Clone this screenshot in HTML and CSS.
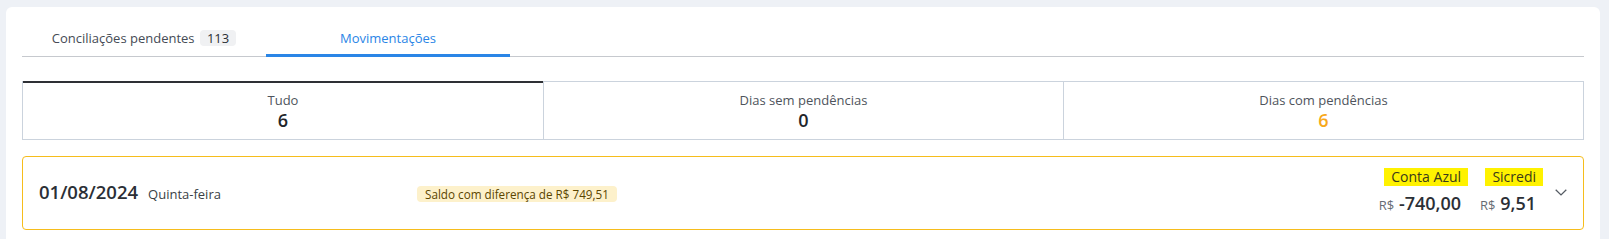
FILE: index.html
```html
<!DOCTYPE html>
<html lang="pt-BR">
<head>
<meta charset="utf-8">
<title>Movimentações</title>
<link rel="stylesheet" href="styles.css">
</head>
<body>
<div class="page">
  <div class="card">
    <div class="tabs">
      <div class="tab">Conciliações pendentes <span class="count">113</span></div>
      <div class="tab active">Movimentações</div>
    </div>

    <div class="stats">
      <div class="stat selected">
        <div class="stat-label">Tudo</div>
        <div class="stat-value">6</div>
      </div>
      <div class="stat">
        <div class="stat-label">Dias sem pendências</div>
        <div class="stat-value">0</div>
      </div>
      <div class="stat">
        <div class="stat-label">Dias com pendências</div>
        <div class="stat-value warn">6</div>
      </div>
    </div>

    <div class="day">
      <div class="day-date">
        <span class="date">01/08/2024</span>
        <span class="weekday">Quinta-feira</span>
      </div>
      <div class="day-status">
        <span class="diff">Saldo com diferença de R$ 749,51</span>
      </div>
      <div class="balances">
        <div class="balance">
          <span class="source">Conta Azul</span>
          <span class="amount"><span class="cur">R$</span> -740,00</span>
        </div>
        <div class="balance">
          <span class="source">Sicredi</span>
          <span class="amount"><span class="cur">R$</span> 9,51</span>
        </div>
      </div>
      <div class="toggle">
        <svg width="12" height="7" viewBox="0 0 12 7" fill="none"><path d="M0.7 0.8 L6 5.9 L11.3 0.8" stroke="#555b63" stroke-width="1.3"/></svg>
      </div>
    </div>
  </div>
</div>
</body>
</html>
```

FILE: styles.css
```css
* { box-sizing: border-box; }
html, body { margin: 0; padding: 0; }
body {
  background: #eef1f6;
  font-family: "Open Sans", "Liberation Sans", sans-serif;
  color: #2b2f36;
}
.page {
  padding: 7px 9px 0 6px;
}
.card {
  background: #ffffff;
  border-radius: 6px 6px 0 0;
  padding: 16px 16px 9px 16px;
}
.tabs {
  display: flex;
  border-bottom: 1px solid #c6c9ce;
  height: 34px;
}
.tab {
  width: 244px;
  height: 34px;
  padding: 6px 0 0;
  margin-bottom: -1px;
  text-align: center;
  font-size: 13px;
  line-height: 18px;
  font-weight: 500;
  color: #454b55;
  border-bottom: 3px solid transparent;
}
.tab.active {
  color: #2a85e6;
  border-bottom-color: #2a85e6;
}
.count {
  display: inline-block;
  height: 16px;
  line-height: 16px;
  padding: 0 7px;
  margin-left: 2px;
  border-radius: 4px;
  background: #f0f1f3;
  color: #2b2f36;
  font-size: 13px;
  font-weight: 500;
}
.stats {
  margin-top: 24px;
  display: grid;
  grid-template-columns: 1fr 1fr 1fr;
  border-left: 1px solid #cbd3dd;
  border-right: 1px solid #cbd3dd;
  border-bottom: 1px solid #cbd3dd;
}
.stat {
  border-top: 1px solid #cbd3dd;
  padding: 9px 0 8px;
  text-align: center;
}
.stat + .stat {
  border-left: 1px solid #cbd3dd;
}
.stat.selected {
  border-top: 2px solid #2e3035;
  padding-top: 8px;
}
.stat-label {
  font-size: 13px;
  line-height: 18px;
  color: #4e545c;
}
.stat-value {
  font-size: 18px;
  line-height: 22px;
  font-weight: 600;
  color: #22252a;
}
.stat-value.warn {
  color: #f7a81b;
}
.day {
  margin-top: 16px;
  border: 1px solid #f6bd1c;
  border-radius: 4px;
  height: 74px;
  display: flex;
  align-items: center;
  padding: 0 14px 0 16px;
}
.day-date {
  width: 378px;
  display: flex;
  align-items: baseline;
  gap: 10px;
  padding-bottom: 3px;
}
.date {
  font-size: 18.5px;
  font-weight: 600;
  color: #2b2f36;
}
.weekday {
  font-size: 13px;
  color: #3a3f46;
}
.day-status {
  flex: 1;
}
.diff {
  display: inline-block;
  height: 16px;
  line-height: 16px;
  padding: 0 8px;
  border-radius: 4px;
  background: #fdf1cb;
  color: #5b4500;
  font-size: 11.7px;
  font-weight: 500;
}
.balances {
  display: flex;
  gap: 12px;
  align-self: flex-start;
  padding-top: 11px;
}
.balance {
  display: flex;
  flex-direction: column;
  align-items: flex-end;
}
.source {
  height: 18px;
  line-height: 18px;
  padding: 0 7px 0 7px;
  background: #fff200;
  color: #3a3a1a;
  font-size: 14px;
}
.amount {
  margin-top: 5px;
  padding-right: 7px;
  font-size: 18px;
  line-height: 24px;
  font-weight: 600;
  color: #2b2f36;
}
.cur {
  font-size: 13px;
  font-weight: 500;
  color: #666b73;
}
.toggle {
  width: 16px;
  margin-left: 10px;
  display: flex;
  justify-content: center;
  padding-bottom: 2px;
}
```
